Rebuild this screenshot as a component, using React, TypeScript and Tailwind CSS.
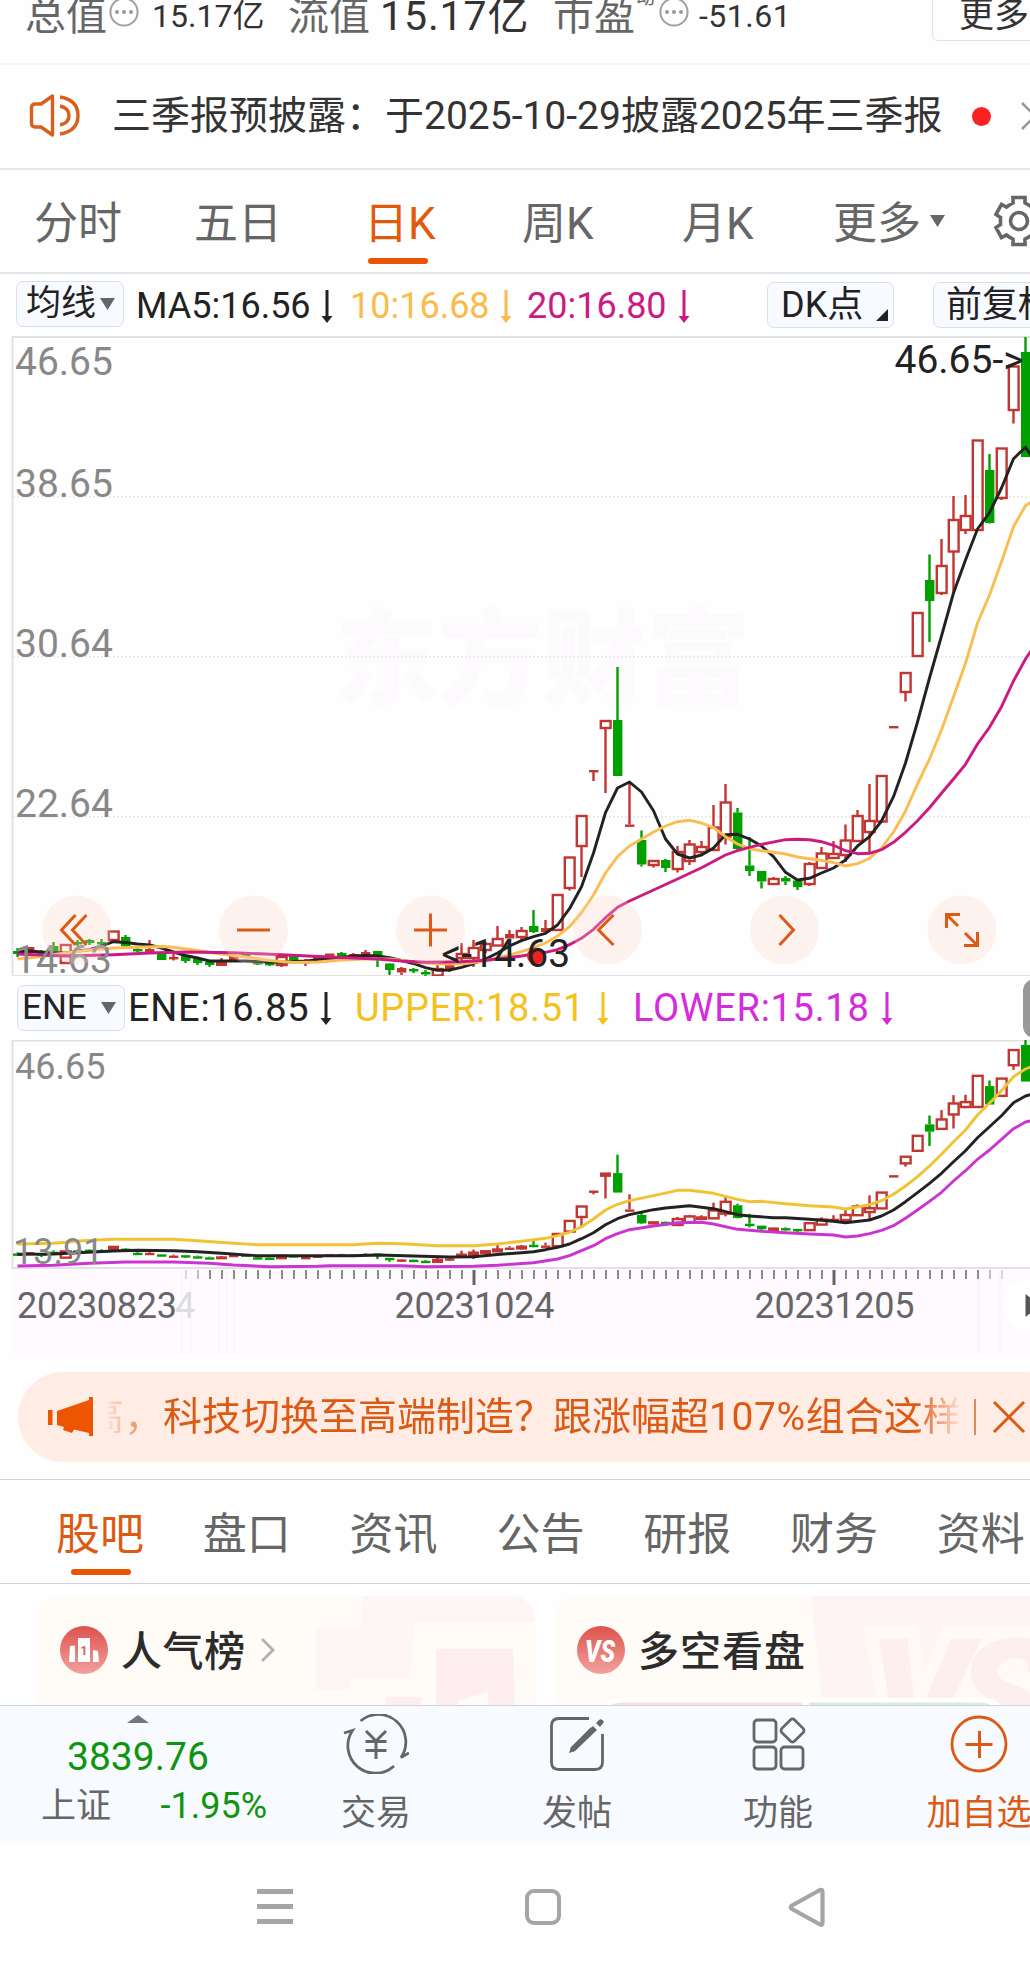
import React from "react";

type Candle = [kind: "r" | "h" | "g", top: number, bottom: number, high?: number, low?: number];

// r = filled rise, h = hollow rise, g = fall; values are chart-space y positions
const candles: Candle[] = [
  ["g", 951, 954, 948, 957], ["r", 947, 953], ["g", 951, 954, 950, 961], ["g", 946, 953, 942, 954],
  ["h", 945, 963], ["g", 942, 944, 940, 946], ["g", 940, 943, 939, 945], ["g", 942, 944, 939, 946],
  ["h", 931.5, 940], ["g", 937, 946.5, 935, 947], ["g", 949, 951, 947, 952], ["r", 949, 952, 940, 953],
  ["g", 953.5, 960], ["r", 957, 959, 954, 960.5], ["g", 956, 961, 955, 963], ["g", 959, 963, 957, 965],
  ["g", 962, 965, 960, 967], ["h", 962, 965, 958, 966], ["r", 955, 960], ["g", 954, 958],
  ["g", 962, 964, 961, 965], ["g", 963, 965, 962, 966], ["h", 957, 965, 956, 967], ["g", 956, 961],
  ["r", 961, 963, 959, 966], ["r", 957, 960], ["r", 953.5, 957], ["g", 953, 957, 952, 958],
  ["r", 954, 957, 953, 959], ["r", 952, 956, 950, 957], ["g", 951, 956.5, 951, 967],
  ["g", 963.5, 970, 963, 975], ["r", 968, 972.5, 967, 975], ["g", 969, 971, 968, 973],
  ["g", 972, 974.5, 970, 977], ["h", 969, 975.5, 964, 976], ["r", 965, 970, 963, 972],
  ["h", 954, 958, 943, 963], ["h", 948, 958, 940, 967], ["h", 944, 950, 942, 953],
  ["h", 939, 945.5, 926, 946], ["r", 934, 938.5, 930, 941], ["h", 931, 937, 927, 940],
  ["g", 926, 932, 910, 933], ["r", 928, 932, 920, 932], ["h", 895, 930], ["h", 857.5, 888, 857, 890.5],
  ["h", 816, 846, 816, 877], ["r", 770, 772, 770, 781], ["h", 721, 728, 721, 793], ["g", 720, 776, 667, 776],
  ["r", 824.5, 826.5, 781, 826], ["g", 840, 864.5, 830.5, 866.5], ["h", 861, 865, 860, 867.5],
  ["g", 860, 868, 859, 872], ["h", 852, 869, 846, 872.5], ["h", 844.5, 861, 840, 865],
  ["h", 847, 852, 841, 855], ["h", 827.5, 850, 805, 850], ["h", 802.5, 836.5, 784, 844.5],
  ["g", 812.5, 849, 808, 850], ["g", 865.5, 871, 837, 876], ["g", 871, 881.5, 871, 888.5],
  ["h", 879, 884, 877, 885], ["g", 878, 881.5, 876, 885], ["g", 880.5, 887, 880, 890],
  ["h", 864, 884, 862, 886], ["h", 853.5, 868, 847, 869], ["h", 854, 858, 841, 859],
  ["h", 840.5, 855, 824.5, 862], ["h", 816, 841, 810, 842], ["h", 821, 832, 784, 852],
  ["h", 776, 821.5], ["r", 726, 728], ["h", 673, 692, 673, 701.5], ["h", 613, 656],
  ["g", 580, 601, 554.5, 642], ["h", 566, 593, 539, 595], ["h", 520, 551.5, 496, 592],
  ["h", 516, 530, 495, 534], ["h", 440.5, 530], ["g", 470, 523, 454, 523.5], ["h", 448.5, 498, 448, 500],
  ["h", 366.5, 410, 366, 423.5], ["g", 352, 457, 337, 457],
];

const ma5 = [0,952,1,951,2,952,3,952.5,4,953,5,951,6,949.7,7,946,8,941.7,9,942.5,10,944,11,945,12,948,13,952,14,955.5,15,958,16,961,19,961,21,962,22,962.3,24,961,26,959,28,956,29,955.5,30,956,31,957.7,32,960.5,33,963.5,34,967.7,35,970.3,36,970,37,967.3,38,963.5,39,959,40,953,41,946,42,940.7,43,936.7,44,933.3,45,925,46,908.7,47,886.7,48,853,49,812.7,50,788,51,782,52,792,53,810.7,54,839,55,854,56,858,57,855,58,848,59,834.7,60,834.3,61,839,62,846,63,856.7,64,872.3,65,880,66,878.3,67,873,68,868,69,860,70,846,71,836.7,72,821,73,796.7,74,763,75,722,76,678,77,636,78,593,79,560,80,529,81,512.7,82,488,83,458.7,84,447.3,84.5,456];
const ma10 = [0,959,2,956.5,4,953,6,950,8,948,10,947.3,12,946.5,13,947.3,15,950.5,17,954,19,957,21,960.5,23,962.5,25,962,27,960,29,959,31,959,33,961.7,35,964,37,964,39,961,41,955,42,951.7,43,947.7,44,943,45,936,46,926.7,47,912.7,48,895,49,873,50,856.7,51,846,52,839,53,832,54,826,55,821.7,56,820.3,57,823,58,827.7,59,836.7,60,844,61,848.7,62,850.7,63,852.3,64,854,65,857,66,858.7,67,860.3,68,862.7,69,866,70,863.7,71,858.3,72,848,73,832,74,811,75,784,76,759,77,730,78,696.7,79,663.3,80,623,81,595,82,561.7,83,526.7,84,505.7,84.5,501.7];
const ma20 = [0,954,4,956,8,954.7,11,953,14,952,18,952.7,22,954.7,26,957,30,959,32,961,34,962.3,37,961.7,39,960.3,41,957.5,42,956,43,954,44,952.3,45,949.7,46,944.7,47,938.3,48,929.3,49,917.7,50,907.3,51,901,53,890,55,879,57,867.7,59,855,60,850.7,61,847.3,62,844.3,64,839.7,65,839.3,66,839.7,67,841.7,68,845.3,69,850.7,70,853.7,71,853.3,72,849.7,73,842.3,74,832.3,75,820.7,76,807.7,77,793.3,78,779,79,764.3,80,744,81,727.3,82,706.7,83,681,84,659,84.5,650];
const upper = [0,1244,3,1243.3,4,1242.3,5,1241,8,1239.3,13,1239.3,15,1240.7,18,1243.3,20,1244.7,28,1244.7,30,1243.3,32,1243.7,35,1245.7,38,1245.7,40,1244,42,1241.3,44,1238.3,45,1235.7,46,1232.3,47,1226.7,48,1219,49,1210,50,1204.3,51,1200.7,53,1195.7,55,1190.3,56,1190.3,58,1193.3,60,1199.3,61,1201.7,62,1201.3,64,1203.7,66,1205.7,68,1207,69,1209,70,1207,71,1204.7,72,1200.7,73,1194.3,74,1186,75,1176.7,76,1166,77,1154.3,78,1141.7,79,1130,80,1115,81,1103.3,82,1090.7,83,1076.7,84,1069,84.5,1066.7];
const ene = [0,1254.3,3,1254,5,1252.7,8,1251,10,1250.3,13,1250.7,15,1251.7,17,1253.3,20,1255.7,28,1255.7,30,1255,33,1256,36,1257,38,1256.7,40,1254.5,42,1252.7,43,1251.7,44,1249.7,45,1247.3,46,1244,47,1238.7,48,1232.7,49,1224.7,50,1218.7,51,1214.7,53,1209.7,54,1208,56,1205.7,58,1208.7,60,1214.7,61,1216,63,1217.7,64,1217.7,66,1219.3,68,1221.3,69,1222.7,71,1220,72,1216,73,1210,74,1201.7,75,1192.7,76,1183.3,77,1173.3,78,1161.7,79,1150.7,80,1137.7,81,1126.7,82,1115.7,83,1102.7,84,1096,84.5,1094.3];
const lower = [0,1266,3,1265.3,6,1263.3,9,1262,13,1262,16,1263.3,18,1265,21,1266.7,25,1266.3,26,1265.7,32,1265.7,34,1266.7,38,1266.3,40,1265.3,43,1262.7,45,1259,46,1255.7,47,1250.7,48,1245.7,49,1238.7,50,1233.7,51,1229.7,53,1226,55,1222.7,57,1222.3,58,1224,60,1229.3,62,1231.3,64,1232.7,66,1234,68,1235,69,1237,70,1236,71,1233.7,72,1230.3,73,1225.7,74,1218.3,75,1210,76,1201.3,77,1192.3,78,1181,79,1170.7,80,1159.3,81,1150,82,1139.3,83,1128.7,84,1122,84.5,1120.7];

const xAt = (i: number) => 17.5 + 12 * i;

function toPath(data: number[]) {
  let d = "";
  for (let k = 0; k < data.length; k += 2) {
    d += `${k ? "L" : "M"}${xAt(data[k]).toFixed(1)} ${data[k + 1]}`;
  }
  return d;
}

const Line = ({ data, color, width = 2.9 }: { data: number[]; color: string; width?: number }) => (
  <path d={toPath(data)} fill="none" stroke={color} strokeWidth={width} strokeLinejoin="round" />
);

function Candles({ scale }: { scale: (y: number) => number }) {
  return (
    <g>
      {candles.map(([kind, top, bottom, high = top, low = bottom], i) => {
        const x = xAt(i);
        const t = scale(top);
        const b = scale(bottom);
        const color = kind === "g" ? "#00a000" : "#c23531";
        const hollow = kind === "h" && b - t > 3.6;
        return (
          <g key={i} stroke={color} strokeWidth="2.4">
            {high < top && <line x1={x} x2={x} y1={scale(high)} y2={t} />}
            {low > bottom && <line x1={x} x2={x} y1={b} y2={scale(low)} />}
            {hollow ? (
              <rect x={x - 4.7} y={t} width="9.8" height={b - t} fill="none" />
            ) : (
              <rect
                x={x - (kind === "h" ? 5.5 : 4.5)}
                y={kind === "h" ? t - 1 : t}
                width={kind === "h" ? 11 : 9.4}
                height={Math.max(kind === "h" ? b - t + 2 : b - t, 2.4)}
                fill={color}
                stroke="none"
              />
            )}
          </g>
        );
      })}
    </g>
  );
}

const Down = ({ className = "" }: { className?: string }) => (
  <svg className={`shrink-0 ${className}`} width="12" height="33" viewBox="0 0 12 33">
    <path d="M6 0V30" stroke="currentColor" strokeWidth="3" />
    <path d="M0.5 26H11.5L6 33Z" fill="currentColor" />
  </svg>
);

const Caret = ({ className = "" }: { className?: string }) => (
  <svg className={`shrink-0 ${className}`} width="15" height="12" viewBox="0 0 15 12">
    <path d="M0 0H15L7.5 12Z" fill="#666" />
  </svg>
);

const Dots = ({ className = "" }: { className?: string }) => (
  <svg className={`shrink-0 ${className}`} width="30" height="30" viewBox="0 0 30 30">
    <circle cx="15" cy="15" r="13.6" fill="none" stroke="#a0a0a0" strokeWidth="2" />
    {[8, 15, 22].map((x) => <circle key={x} cx={x} cy="15" r="2" fill="#999" />)}
  </svg>
);

function Summary() {
  return (
    <div className="flex h-[64.5px] items-start overflow-hidden border-b-2 border-[#f6f6f6] leading-none text-[#333] *:shrink-0">
      <span className="-mt-[4px] ml-[25px] w-[84px] text-[41px] text-[#666]">总值</span>
      <Dots className="-mt-[3px]" />
      <span className="ml-[13px] w-[124px] text-[32px]">15.17亿</span>
      <span className="-mt-[4px] ml-[12px] w-[92px] text-[41px] text-[#666]">流值</span>
      <span className="-mt-[4px] w-[151px] text-[41px] tracking-[0.9px]">15.17亿</span>
      <span className="-mt-[4px] ml-[22px] w-[83px] text-[41px] text-[#666]">市盈</span>
      <span className="-mt-[12px] w-[23px] text-[19px] text-[#666]">动</span>
      <Dots className="-mt-[3px]" />
      <span className="ml-[10px] w-[229px] text-[32px] tracking-[0.5px]">-51.61</span>
      <div className="-mt-[10px] ml-[4px] h-[51px] w-[140px] rounded-[6px] border border-[#e2e3ea] pl-[26px] pt-[7px] text-[35px]">更多</div>
    </div>
  );
}

function Notice() {
  return (
    <div className="flex h-[105px] items-center overflow-hidden border-b-2 border-[#e8e8e8] text-[#333] *:shrink-0">
      <svg className="ml-[28px]" width="54" height="46" viewBox="0 0 54 46" fill="none" stroke="#d95f1c" strokeWidth="3.4">
        <path d="M24.500 3V42L13 34H7Q3.500 34 3.500 30.500V14.500Q3.500 11 7 11H13Z" strokeLinejoin="round" />
        <path d="M32 13Q41 15 41 22.500Q41 30 32 32M32 4Q50 7 50 22.500Q50 38 32 41" />
      </svg>
      <span className="ml-[30px] w-[850px] whitespace-nowrap text-[39px] leading-[39px]">三季报预披露：于2025-10-29披露2025年三季报</span>
      <span className="ml-[10px] size-[19px] rounded-full bg-[#fa2222]" />
      <svg className="ml-[29px]" width="24" height="30" viewBox="0 0 24 30" fill="none" stroke="#999" strokeWidth="2.6">
        <path d="M2 2L15 15L2 28" />
      </svg>
    </div>
  );
}

function PeriodTabs() {
  return (
    <div className="flex h-[104px] items-start border-b-2 border-[#e3e4ea] pt-[32px] text-[44px] leading-[44px] text-[#666] *:shrink-0">
      <span className="ml-[34px] w-[160px]">分时</span>
      <span className="w-[170px]">五日</span>
      <div className="w-[158px] text-[#e25a0c]">
        日K
        <div className="ml-[4px] mt-[12px] h-[6.500px] w-[60px] rounded-full bg-[#ea5504]" />
      </div>
      <span className="w-[160px]">周K</span>
      <span className="w-[151px]">月K</span>
      <span className="w-[97px]">更多</span>
      <Caret className="mt-[13px]" />
      <svg className="-mt-[7px] ml-[48px]" width="52" height="52" viewBox="0 0 52 52" fill="none" stroke="#666" strokeWidth="3.6">
        <path d="M20 2.500H32V8Q36 10 38.500 12L43.500 9.500L49 19.500L44.500 22.500V29.500L49 32.500L43.500 42.500L38.500 40Q36 42 32 44V49.500H20V44Q16 42 13.500 40L8.500 42.500L3 32.500L7.500 29.500V22.500L3 19.500L8.500 9.500L13.500 12Q16 10 20 8Z" />
        <circle cx="26" cy="26" r="8.500" />
      </svg>
    </div>
  );
}

function AverageBar() {
  return (
    <div className="flex h-[62px] items-start overflow-hidden pt-[7px] text-[36px] leading-[36px] text-[#222] *:shrink-0">
      <div className="ml-[16px] flex h-[46px] w-[108px] items-center rounded-[7px] border border-[#dcdfe8] bg-[#f7faff] pl-[9px] text-[35px]">
        均线<Caret className="ml-[4px]" />
      </div>
      <span className="ml-[12px] mt-[7px] w-[185px]">MA5:16.56</span>
      <Down className="mt-[9px]" />
      <span className="ml-[17px] mt-[7px] w-[150px] text-[#fbbb4a]">10:16.68</span>
      <Down className="mt-[9px] text-[#fbbb4a]" />
      <span className="ml-[15px] mt-[7px] w-[151px] text-[#cb1b82]">20:16.80</span>
      <Down className="mt-[9px] text-[#cb1b82]" />
      <div className="ml-[77px] mt-[1px] flex h-[46px] w-[127px] items-center rounded-[7px] border border-[#dcdfe8] bg-[#f7faff] pl-[13px] text-[36px]">
        DK点
        <svg className="ml-[13px] mt-[20px]" width="12" height="12" viewBox="0 0 12 12"><path d="M12 0V12H0Z" fill="#222" /></svg>
      </div>
      <div className="ml-[39px] mt-[1px] flex h-[46px] w-[150px] items-center rounded-[7px] border border-[#dcdfe8] bg-[#f7faff] pl-[12px] text-[36px]">前复权</div>
    </div>
  );
}

const controls = [
  { x: 76.5, d: "M-1 -15L-15 0L-1 15M10 -15L-4 0L10 15" },
  { x: 253.5, d: "M-16.500 0H16.500" },
  { x: 430.5, d: "M-16.500 0H16.500M0 -16.500V16.500" },
  { x: 607.5, d: "M6 -15L-9 0L6 15" },
  { x: 784.5, d: "M-5 -15L9 0L-5 15" },
  { x: 962, d: "M-15.500 -2V-15.500H-2M-15 -15L-4 -4M2 15.500H15.500V2M15 15L3 3" },
];

function MainChart() {
  return (
    <svg className="block shrink-0" width="1030" height="640" viewBox="0 336 1030 640">
      <text x="334" y="697" fontSize="104" fontWeight="900" fill="#fdfafd">东方财富</text>
      <path d="M1030 337H12.500V976H1030" fill="none" stroke="#e2e2e2" strokeWidth="2" />
      <path d="M13 496.700H1030M13 656.700H1030M13 816.700H1030" stroke="#e8e8e8" strokeWidth="1.500" strokeDasharray="2 2" />
      <Candles scale={(y) => y} />
      <Line data={ma5} color="#222" />
      <Line data={ma10} color="#fbbd52" />
      <Line data={ma20} color="#cb1b82" />
      <g fontSize="39" fill="#888">
        <text x="15" y="375">46.65</text>
        <text x="15" y="497">38.65</text>
        <text x="15" y="656.5">30.64</text>
        <text x="15" y="816.5">22.64</text>
        <text x="14" y="972.5">14.63</text>
      </g>
      {controls.map((c) => (
        <g key={c.x} transform={`translate(${c.x} 930)`}>
          <circle r="34.500" fill="#fdd5c5" opacity="0.28" />
          <path d={c.d} fill="none" stroke="#dc5a14" strokeWidth="3" />
        </g>
      ))}
      <circle cx="535.500" cy="956" r="8.500" fill="#f02020" />
      <g fontSize="39" fill="#222">
        <text x="894.5" y="372.5">46.65-&gt;</text>
        <text x="441.5" y="967">&lt;-14.63</text>
      </g>
    </svg>
  );
}

function EneBar() {
  return (
    <div className="flex h-[64px] items-start overflow-hidden pt-[9px] text-[38px] leading-[38px] tracking-[0.7px] text-[#222] *:shrink-0">
      <div className="ml-[17px] flex h-[46px] w-[108px] items-center rounded-[7px] border border-[#dcdfe8] bg-[#f7faff] pl-[4px] text-[35px] tracking-normal">
        ENE<Caret className="ml-[14px]" />
      </div>
      <span className="ml-[3px] mt-[4px] w-[192px]">ENE:16.85</span>
      <Down className="mt-[7px]" />
      <span className="ml-[23px] mt-[4px] w-[242px] text-[#f4c21c]">UPPER:18.51</span>
      <Down className="mt-[7px] text-[#f4c21c]" />
      <span className="ml-[24px] mt-[4px] w-[248px] text-[#d42bdc]">LOWER:15.18</span>
      <Down className="mt-[7px] text-[#d42bdc]" />
      <div className="-mt-[6px] ml-[130px] h-[59px] w-[24px] rounded-[12px] bg-[#999]" />
    </div>
  );
}

function SubChart() {
  return (
    <svg className="block shrink-0" width="1030" height="314" viewBox="0 1040 1030 314">
      <rect x="12" y="1268" width="1018" height="86" fill="#fefaff" />
      <path d="M182 1270V1354M190.500 1270V1354M219 1270V1354M226.500 1270V1354M234 1270V1354M978 1270V1354M980 1270V1354M1000 1270V1354" stroke="#f8f6fa" strokeWidth="1.500" />
      <path d="M1030 1040.500H12.500V1268H1030" fill="none" stroke="#e2e2e2" strokeWidth="2" />
      <Candles scale={(y) => 1039.700 + (y - 336.700) * 0.348} />
      <Line data={upper} color="#f0c332" />
      <Line data={ene} color="#222" />
      <Line data={lower} color="#cc34d2" />
      {Array.from({ length: 69 }, (_, k) => {
        const major = k === 24 || k === 54;
        return (
          <line
            key={k}
            x1={186 + 12 * k}
            x2={186 + 12 * k}
            y1="1270"
            y2={major ? 1285 : 1279}
            stroke={major ? "#666" : "#8c8c8c"}
            strokeWidth={major ? 3 : 2}
            opacity={k === 0 || k === 68 ? 0.3 : k === 1 || k === 67 ? 0.55 : 1}
          />
        );
      })}
      <g fill="#888" fontSize="36">
        <text x="15" y="1078.5">46.65</text>
        <text x="13" y="1263.5">13.91</text>
      </g>
      <g fill="#666" fontSize="36">
        <text x="17" y="1317.5" textLength="160">20230823</text>
        <text x="175" y="1317.5" fill="#dcdcdc">4</text>
        <text x="394.5" y="1317.5" textLength="160">20231024</text>
        <text x="754.5" y="1317.5" textLength="160">20231205</text>
      </g>
      <circle cx="1030" cy="1305.500" r="26" fill="#fff" />
      <path d="M1025.500 1294L1040 1305.500L1025.500 1317Z" fill="#555" />
    </svg>
  );
}

function Banner() {
  return (
    <div className="h-[126px] shrink-0 overflow-hidden border-b border-[#d3d4de] pt-[18px]">
      <div className="ml-[18px] flex h-[90px] w-[1052px] items-center rounded-full bg-[#ffede5]">
        <svg className="ml-[30px] shrink-0" width="46" height="40" viewBox="0 0 46 40" fill="#ee5500">
          <path d="M0 13H4.500V28H0ZM9 14L41 3V0H45V39H41V36L26 32.500L24 36L15 33L16 30L9 28Z" />
        </svg>
        <div className="ml-[14px] w-[850px] shrink-0 overflow-hidden [mask-image:linear-gradient(90deg,rgba(0,0,0,0.08)_0,rgba(0,0,0,0.3)_14px,#000_54px,#000_808px,rgba(0,0,0,0.12)_850px)]">
          <span className="-ml-[23px] block whitespace-nowrap text-[39px] leading-[48px] text-[#dc5a14]">高，科技切换至高端制造？跟涨幅超<span className="tracking-[0.6px]">107%</span>组合这样</span>
        </div>
        <span className="ml-[16px] h-[36px] w-[1.500px] shrink-0 bg-[#d98a60]" />
        <svg className="ml-[16px] shrink-0" width="34" height="34" viewBox="0 0 34 34" stroke="#dc5a14" strokeWidth="3"><path d="M2 2L32 32M32 2L2 32" /></svg>
      </div>
    </div>
  );
}

function SectionTabs() {
  const tabs = ["股吧", "盘口", "资讯", "公告", "研报", "财务", "资料"];
  return (
    <div className="flex h-[104px] shrink-0 border-b border-[#d3d4de] pl-[56px] pt-[33px] text-[44px] leading-[44px] text-[#666]">
      {tabs.map((t, i) => (
        <div key={t} className={`w-[146.800px] shrink-0 ${i === 0 ? "text-[#dc5a14]" : ""}`}>
          {t}
          {i === 0 && <div className="ml-[15px] mt-[12px] h-[6px] w-[60px] rounded-full bg-[#ea5504]" />}
        </div>
      ))}
    </div>
  );
}

function Cards() {
  return (
    <div className="flex h-[121.500px] shrink-0 overflow-hidden pl-[36px] pt-[12px] text-[41px] font-medium leading-[41px] text-[#2c2c2c]">
      <div className="relative h-[160px] w-[499px] shrink-0 overflow-hidden rounded-[24px] bg-[#fffbf6]">
        <svg className="absolute left-0 top-0" width="499" height="110" viewBox="36 1596 499 110">
          <path d="M363 1596H535V1690H543L536 1622H414L410 1678H351L349 1690H316V1627H361Z" fill="#fef5f6" />
          <path d="M436 1649H513L515 1706H436ZM386 1697H421V1706H386Z" fill="#feeeef" />
          <path d="M458 1701L488 1692V1706H458Z" fill="#fffbf6" />
        </svg>
        <div className="relative flex items-center pl-[24px] pt-[30px]">
          <svg className="shrink-0" width="48" height="48" viewBox="0 0 48 48">
            <defs>
              <linearGradient id="badge" x1="0" y1="0" x2="0" y2="1">
                <stop offset="0" stopColor="#dd524d" />
                <stop offset="1" stopColor="#f3a19d" />
              </linearGradient>
            </defs>
            <circle cx="24" cy="24" r="24" fill="url(#badge)" />
            <path d="M10 20L15 19.500V36H9ZM18 12H30V36H18ZM33 24L38 25L39 36H33Z" fill="#fff" />
            <text x="24" y="29" textAnchor="middle" fontSize="13" fontWeight="700" fill="#e0605b">1</text>
          </svg>
          <span className="ml-[13px] mt-[5px] tracking-[0.6px]">人气榜</span>
          <svg className="ml-[14px]" width="16" height="26" viewBox="0 0 16 26" fill="none" stroke="#b0b0b0" strokeWidth="2.800"><path d="M2 2L13 13L2 24" /></svg>
        </div>
      </div>
      <div className="relative ml-[19px] h-[160px] w-[540px] shrink-0 overflow-hidden rounded-[24px] bg-[#fffbf6]">
        <svg className="absolute left-0 top-0" width="476" height="110" viewBox="554 1596 476 110">
          <path d="M811 1596H1030V1706H823Z" fill="#fef4f4" />
          <text x="868" y="1752" fontSize="160" fontWeight="900" fontStyle="italic" letterSpacing="-14" fill="#feefef" stroke="#fffaf6" strokeWidth="24" paintOrder="stroke">VS</text>
          <path d="M604 1706Q608 1698 620 1698H985Q997 1698 1001 1706Z" fill="#fff" />
          <path d="M610 1706Q614 1702.500 622 1702.500H802V1706Z" fill="#f9dfdc" />
          <path d="M809 1706V1702.500H980Q988 1702.500 992 1706Z" fill="#dfeadd" />
        </svg>
        <div className="relative flex items-center pl-[23px] pt-[30px]">
          <svg className="shrink-0" width="48" height="48" viewBox="0 0 48 48">
            <circle cx="24" cy="24" r="24" fill="url(#badge)" />
            <text x="23" y="36" textAnchor="middle" fontSize="32" fontWeight="900" fontStyle="italic" fill="#fff" textLength="30" lengthAdjust="spacingAndGlyphs">VS</text>
          </svg>
          <span className="ml-[13px] mt-[6px] tracking-[1px]">多空看盘</span>
        </div>
      </div>
    </div>
  );
}

function Action({ label, accent, children }: { label: string; accent?: boolean; children: React.ReactNode }) {
  return (
    <div className={`flex w-[201px] shrink-0 flex-col items-center whitespace-nowrap pt-[8px] text-[35px] leading-[35px] ${accent ? "text-[#dc5a14]" : "text-[#666]"}`}>
      <svg width="66" height="60" viewBox="-33 -30 66 60" fill="none" stroke="currentColor" strokeWidth="2.800">{children}</svg>
      <span className="mt-[22px]">{label}</span>
    </div>
  );
}

function BottomBar() {
  return (
    <div className="flex h-[136px] shrink-0 overflow-hidden border-t border-[#ccd3e2] bg-[#f7faff]">
      <div className="flex w-[275.500px] shrink-0 flex-col items-start">
        <svg className="ml-[127px] mt-[9px]" width="22" height="8" viewBox="0 0 22 8"><path d="M0 8L11 0L22 8Z" fill="#73767c" /></svg>
        <span className="ml-[67px] mt-[15px] text-[39px] leading-[39px] text-[#0f940f]">3839.76</span>
        <div className="ml-[41px] mt-[11px] flex text-[36px] leading-[36px] text-[#666]">
          <span className="mt-[1px] w-[119.500px] text-[35px]">上证</span>
          <span className="text-[#0f940f]">-1.95%</span>
        </div>
      </div>
      <Action label="交易">
        <path d="M-15.500 -23A27.500 27.500 0 0 1 25 13.500L33 9M18 22A27.500 27.500 0 0 1 -23.500 -13.500L-32 -11" />
        <path d="M-10 -13L0 -3L10 -13M0 -3V15M-10.500 -2.500H10.500M-10.500 6.500H10.500" strokeWidth="3" />
      </Action>
      <Action label="发帖">
        <path d="M12 -25.500H-18Q-25.500 -25.500 -25.500 -18V18Q-25.500 25.500 -18 25.500H18Q25.500 25.500 25.500 18V-10" />
        <path d="M16 -18L20 -14L-2 7L-8 9L-6 3ZM19 -21L22 -24Q25 -26 27 -22L23 -17Z" fill="currentColor" stroke="none" />
        <path d="M15.500 -15L-5 6" strokeWidth="5" />
      </Action>
      <Action label="功能">
        <rect x="-24" y="-24" width="22" height="22" rx="3.500" />
        <rect x="-24" y="3" width="22" height="22" rx="3.500" />
        <rect x="3" y="3" width="22" height="22" rx="3.500" />
        <rect x="5.500" y="-22.500" width="18" height="18" rx="3" transform="rotate(45 14.500 -13.500)" />
      </Action>
      <Action label="加自选" accent>
        <circle r="27" />
        <path d="M-13.500 0.500H13.500M0.500 -13V14" strokeWidth="3" />
      </Action>
    </div>
  );
}

function SystemNav() {
  return (
    <div className="flex h-[132px] items-start pt-[46px]">
      <div className="ml-[257px] mt-[2px] flex flex-col gap-[10.300px]">
        <span className="h-[4.700px] w-[36px] bg-[#a5a5a5]" />
        <span className="h-[4.700px] w-[36px] bg-[#a5a5a5]" />
        <span className="h-[4.700px] w-[36px] bg-[#a5a5a5]" />
      </div>
      <span className="ml-[232px] mt-[2px] size-[36px] rounded-[9px] border-4 border-[#a5a5a5]" />
      <svg className="ml-[227px]" width="38" height="40" viewBox="0 0 38 40" fill="none" stroke="#a5a5a5" strokeWidth="4.200" strokeLinejoin="round">
        <path d="M34.500 5V36Q34.500 38.500 32 37.500L4 22Q1.500 20.500 4 18.500L32 3Q34.500 2 34.500 5Z" />
      </svg>
    </div>
  );
}

export default function App() {
  return (
    <div className="flex h-[1973px] w-[1030px] flex-col overflow-hidden whitespace-nowrap bg-[#fefefe] font-['Roboto','Noto_Sans_CJK_SC',sans-serif]">
      <Summary />
      <Notice />
      <PeriodTabs />
      <AverageBar />
      <MainChart />
      <EneBar />
      <SubChart />
      <Banner />
      <SectionTabs />
      <Cards />
      <BottomBar />
      <SystemNav />
    </div>
  );
}
